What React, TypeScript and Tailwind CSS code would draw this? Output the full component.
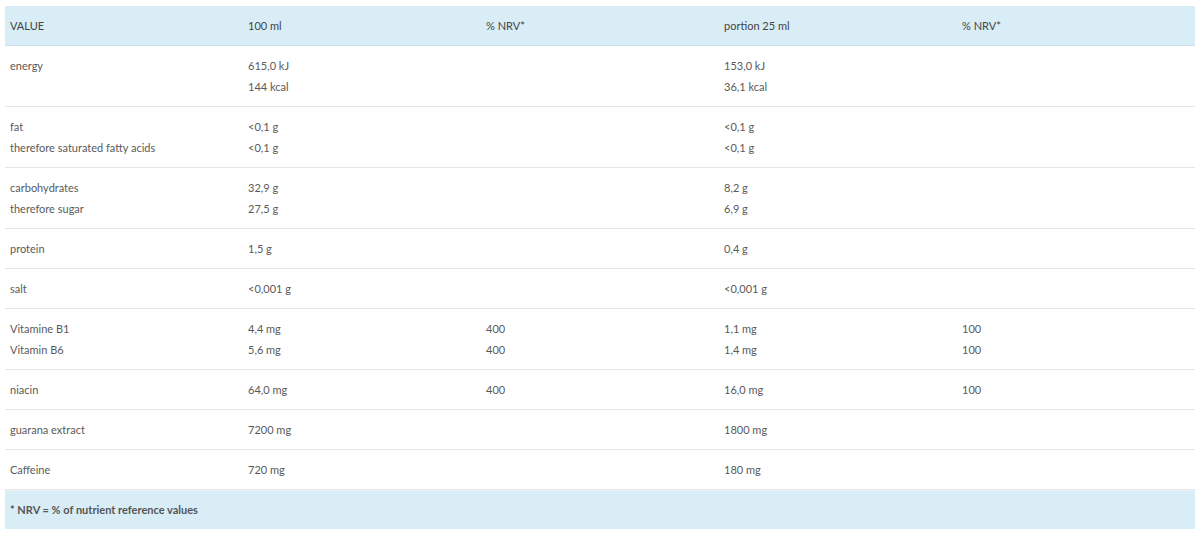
import React from "react";

type Row = { cells: string[][] };

const rows: Row[] = [
  { cells: [["energy"], ["615,0 kJ", "144 kcal"], [], ["153,0 kJ", "36,1 kcal"], []] },
  { cells: [["fat", "therefore saturated fatty acids"], ["<0,1 g", "<0,1 g"], [], ["<0,1 g", "<0,1 g"], []] },
  { cells: [["carbohydrates", "therefore sugar"], ["32,9 g", "27,5 g"], [], ["8,2 g", "6,9 g"], []] },
  { cells: [["protein"], ["1,5 g"], [], ["0,4 g"], []] },
  { cells: [["salt"], ["<0,001 g"], [], ["<0,001 g"], []] },
  { cells: [["Vitamine B1", "Vitamin B6"], ["4,4 mg", "5,6 mg"], ["400", "400"], ["1,1 mg", "1,4 mg"], ["100", "100"]] },
  { cells: [["niacin"], ["64,0 mg"], ["400"], ["16,0 mg"], ["100"]] },
  { cells: [["guarana extract"], ["7200 mg"], [], ["1800 mg"], []] },
  { cells: [["Caffeine"], ["720 mg"], [], ["180 mg"], []] },
];

const headers = ["VALUE", "100 ml", "% NRV*", "portion 25 ml", "% NRV*"];

export default function App() {
  return (
    <div
      className="w-[1200px] h-[535px] bg-white pt-[6px] px-[5px]"
      style={{ fontFamily: "Lato, 'Open Sans', sans-serif" }}
    >
      <div className="w-[1190px] text-[11px] text-[#5a5a5a]">
        <div className="grid grid-cols-5 bg-[#d9edf7] border-b border-[#c9dfe8] h-[40px] items-center text-[#444]">
          {headers.map((h, i) => (
            <div key={i} className="pl-[5px] leading-[21px]">
              {h}
            </div>
          ))}
        </div>
        {rows.map((r, ri) => (
          <div key={ri} className="grid grid-cols-5 border-b border-[#e5e5e5] py-[9px]">
            {r.cells.map((c, ci) => (
              <div key={ci} className="pl-[5px]">
                {c.map((t, ti) => (
                  <div key={ti} className="leading-[21px]">
                    {t}
                  </div>
                ))}
              </div>
            ))}
          </div>
        ))}
        <div className="bg-[#d9edf7] h-[39px] flex items-center pl-[5px] font-bold text-[#555] border-t border-[#e8f2f7]">
          * NRV = % of nutrient reference values
        </div>
      </div>
    </div>
  );
}
